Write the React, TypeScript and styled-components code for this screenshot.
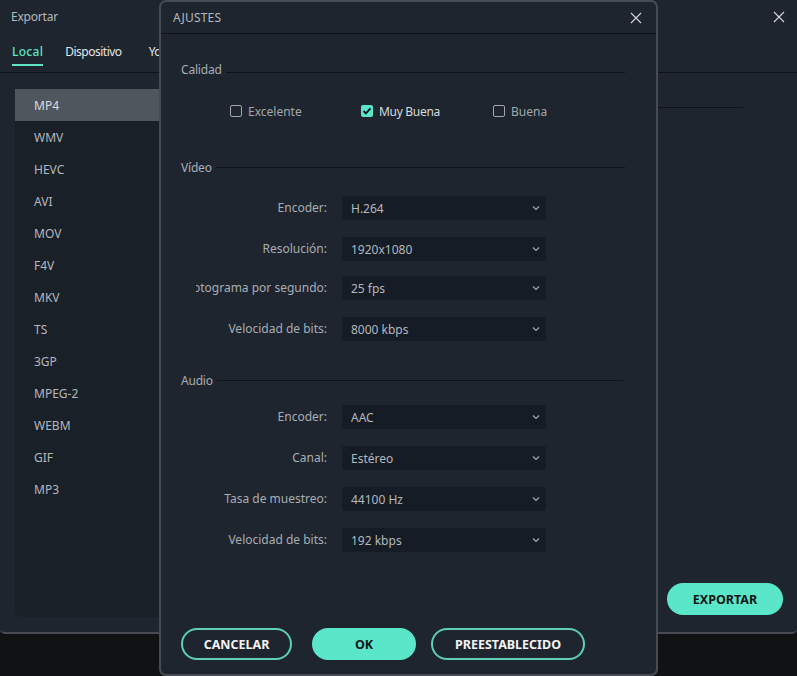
import React from "react";
import styled, { createGlobalStyle } from "styled-components";

const Global = createGlobalStyle`
  html, body { margin: 0; padding: 0; background: #111214; }
  body { width: 797px; height: 676px; overflow: hidden; font-family: "Noto Sans", "DejaVu Sans", sans-serif; font-size: 12px; color: #c3c6ca; position: relative; }
`;

const Screen = styled.div`
  position: relative;
  width: 797px;
  height: 676px;
  overflow: hidden;
  background: #111214;
`;

const ExportWindow = styled.div`
  width: 797px;
  height: 634px;
  box-sizing: border-box;
  background: #1e252e;
  border-bottom: 2px solid #474c54;
  border-radius: 0 0 5px 5px;
  display: flex;
  flex-direction: column;
`;

const TitleBar = styled.div`
  height: 33px;
  flex: none;
  display: flex;
  align-items: center;
  justify-content: space-between;
  padding: 0 12px 0 11px;
  color: #b4b8bd;
  letter-spacing: -0.2px;
`;

const CloseButton = styled.button`
  border: 0;
  padding: 0;
  background: none;
  width: 12px;
  height: 12px;
  display: flex;
  svg { display: block; }
`;

const Tabs = styled.div`
  height: 40px;
  flex: none;
  box-sizing: border-box;
  border-bottom: 1px solid #0e1116;
  display: flex;
  gap: 22px;
  padding-left: 12px;
`;

const Tab = styled.div<{ $active?: boolean }>`
  height: 33px;
  box-sizing: border-box;
  padding: 11px ${(p) => (p.$active ? 0 : 5)}px 0 0;
  line-height: 16px;
  letter-spacing: ${(p) => (p.$active ? "0.3px" : "-0.5px")};
  color: ${(p) => (p.$active ? "#5ce5c6" : "#e3e5e7")};
  font-weight: ${(p) => (p.$active ? 500 : 400)};
  border-bottom: 2px solid ${(p) => (p.$active ? "#5ce5c6" : "transparent")};
`;

const Body = styled.div`
  flex: 1;
  display: flex;
  padding: 16px 14px 15px 15px;
`;

const FormatList = styled.div`
  width: 300px;
  height: 528px;
  background: #1a2028;
  border-radius: 0 0 6px 6px;
`;

const FormatItem = styled.div<{ $selected?: boolean }>`
  height: 32px;
  line-height: 34px;
  padding-left: 19px;
  color: ${(p) => (p.$selected ? "#d9dbdd" : "#b4b8bd")};
  background: ${(p) => (p.$selected ? "#50565d" : "transparent")};
`;

const SidePanel = styled.div`
  flex: 1;
  display: flex;
  flex-direction: column;
  align-items: flex-end;
  justify-content: space-between;
`;

const SideRule = styled.div`
  width: 280px;
  height: 1px;
  background: #0e1116;
  margin: 18px 40px 0 0;
`;

const ExportButton = styled.button`
  width: 116px;
  height: 32px;
  margin-bottom: 2px;
  border: 0;
  border-radius: 16px;
  background: #5ae6c8;
  color: #10151a;
  font: 700 12.5px "Noto Sans", sans-serif;
`;

const Dialog = styled.div`
  position: absolute;
  left: 159px;
  top: 0;
  width: 499px;
  height: 676px;
  box-sizing: border-box;
  background: #1e252e;
  border: 2px solid #474c54;
  border-radius: 7px;
  display: flex;
  flex-direction: column;
`;

const DialogHeader = styled.div`
  height: 32px;
  flex: none;
  box-sizing: border-box;
  border-bottom: 1px solid #0e1116;
  display: flex;
  align-items: center;
  justify-content: space-between;
  padding: 0 14px 0 12px;
  color: #b4b8bd;
  letter-spacing: 0.2px;
`;

const DialogBody = styled.div`
  flex: 1;
  padding: 0 20px;
  display: flex;
  flex-direction: column;
`;

const Section = styled.div<{ $top: number; $right: number; $drop?: number }>`
  margin-top: ${(p) => p.$top}px;
  margin-right: ${(p) => p.$right}px;
  height: 16px;
  display: flex;
  align-items: center;
  gap: 4px;
  color: #a9adb3;
  letter-spacing: -0.2px;
  &::after {
    content: "";
    flex: 1;
    height: 1px;
    background: #0e1116;
    transform: translateY(${(p) => p.$drop ?? 0}px);
  }
`;

const QualityRow = styled.div`
  margin-top: 22px;
  height: 24px;
  display: flex;
  align-items: center;
  padding-left: 49px;
`;

const Quality = styled.label<{ $width: number; $on?: boolean }>`
  width: ${(p) => p.$width}px;
  display: flex;
  align-items: center;
  gap: 6px;
  letter-spacing: ${(p) => (p.$on ? "-0.3px" : "0")};
  color: ${(p) => (p.$on ? "#d9dbdd" : "#a3a7ad")};
`;

const Box = styled.span<{ $on?: boolean }>`
  width: 12px;
  height: 12px;
  box-sizing: border-box;
  border-radius: 2px;
  border: ${(p) => (p.$on ? "0" : "1px solid #a3a7ad")};
  background: ${(p) => (p.$on ? "#5ae6c8" : "transparent")};
  display: flex;
  align-items: center;
  justify-content: center;
`;

const Row = styled.div<{ $top: number }>`
  margin-top: ${(p) => p.$top}px;
  height: 24px;
  display: flex;
  align-items: center;
  gap: 15px;
`;

const RowLabel = styled.div`
  width: 131px;
  margin-left: 15px;
  margin-bottom: 2px;
  text-align: right;
  white-space: nowrap;
  direction: rtl;
  overflow: hidden;
  color: #a9adb3;
`;

const Select = styled.div`
  width: 204px;
  height: 24px;
  box-sizing: border-box;
  background: #161c25;
  border-radius: 3px;
  display: flex;
  align-items: center;
  justify-content: space-between;
  padding: 0 5px 0 9px;
  color: #b4b8bd;
`;

const Footer = styled.div`
  flex: none;
  display: flex;
  padding: 0 20px 14px;
`;

const Pill = styled.button<{ $w: number; $gap: number; $primary?: boolean }>`
  width: ${(p) => p.$w}px;
  height: 32px;
  margin-right: ${(p) => p.$gap}px;
  box-sizing: border-box;
  border-radius: 16px;
  padding: 0;
  border: 2px solid ${(p) => (p.$primary ? "#5ae6c8" : "#5fd0b7")};
  background: ${(p) => (p.$primary ? "#5ae6c8" : "transparent")};
  color: ${(p) => (p.$primary ? "#10151a" : "#f2f3f4")};
  font: 700 12.5px "Noto Sans", sans-serif;
`;

const X = () => (
  <svg width="12" height="12" viewBox="0 0 12 12" fill="none" stroke="#d5d7da" strokeWidth="1.1">
    <path d="M1 1l10 10M11 1L1 11" />
  </svg>
);

const Chevron = () => (
  <svg width="10" height="10" viewBox="0 0 10 10" fill="none" stroke="#a3a7ad" strokeWidth="1.2">
    <path d="M2 3.5l3 3 3-3" />
  </svg>
);

const Check = () => (
  <svg width="10" height="10" viewBox="0 0 10 10" fill="none" stroke="#10151a" strokeWidth="1.8">
    <path d="M1.5 5l2.4 2.4 4.6-5" />
  </svg>
);

const formats = ["MP4", "WMV", "HEVC", "AVI", "MOV", "F4V", "MKV", "TS", "3GP", "MPEG-2", "WEBM", "GIF", "MP3"];

const videoRows = [
  { label: "Encoder:", value: "H.264", top: 21 },
  { label: "Resolución:", value: "1920x1080", top: 17 },
  { label: "Fotograma por segundo:", value: "25 fps", top: 15 },
  { label: "Velocidad de bits:", value: "8000 kbps", top: 17 },
];

const audioRows = [
  { label: "Encoder:", value: "AAC", top: 17 },
  { label: "Canal:", value: "Estéreo", top: 17 },
  { label: "Tasa de muestreo:", value: "44100 Hz", top: 17 },
  { label: "Velocidad de bits:", value: "192 kbps", top: 17 },
];

const SettingRow = ({ label, value, top }: { label: string; value: string; top: number }) => (
  <Row $top={top}>
    <RowLabel><bdi>{label}</bdi></RowLabel>
    <Select>
      {value}
      <Chevron />
    </Select>
  </Row>
);

export default function App() {
  return (
    <Screen>
      <Global />
      <ExportWindow>
        <TitleBar>
          Exportar
          <CloseButton aria-label="Cerrar"><X /></CloseButton>
        </TitleBar>
        <Tabs>
          <Tab $active>Local</Tab>
          <Tab>Dispositivo</Tab>
          <Tab>YouTube</Tab>
        </Tabs>
        <Body>
          <FormatList>
            {formats.map((f, i) => (
              <FormatItem key={f} $selected={i === 0}>{f}</FormatItem>
            ))}
          </FormatList>
          <SidePanel>
            <SideRule />
            <ExportButton>EXPORTAR</ExportButton>
          </SidePanel>
        </Body>
      </ExportWindow>
      <Dialog>
        <DialogHeader>
          AJUSTES
          <CloseButton aria-label="Cerrar"><X /></CloseButton>
        </DialogHeader>
        <DialogBody>
          <Section $top={27} $right={11} $drop={3}>Calidad</Section>
          <QualityRow>
            <Quality $width={131}><Box />Excelente</Quality>
            <Quality $width={132} $on><Box $on><Check /></Box>Muy Buena</Quality>
            <Quality $width={70}><Box />Buena</Quality>
          </QualityRow>
          <Section $top={36} $right={11}>Vídeo</Section>
          {videoRows.map((r) => <SettingRow key={r.label} {...r} />)}
          <Section $top={31} $right={13}>Audio</Section>
          {audioRows.map((r) => <SettingRow key={r.label + r.value} {...r} />)}
        </DialogBody>
        <Footer>
          <Pill $w={111} $gap={20}>CANCELAR</Pill>
          <Pill $w={104} $gap={15} $primary>OK</Pill>
          <Pill $w={154} $gap={0}>PREESTABLECIDO</Pill>
        </Footer>
      </Dialog>
    </Screen>
  );
}
